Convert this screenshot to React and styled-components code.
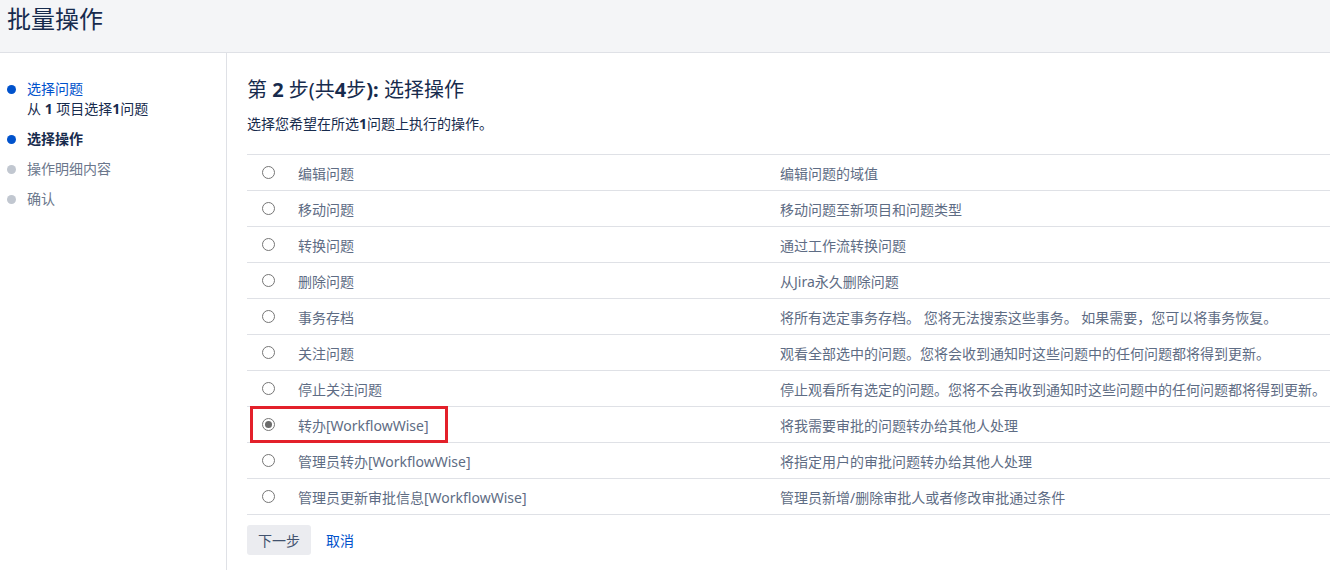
import React from "react";
import styled, { createGlobalStyle } from "styled-components";

const Global = createGlobalStyle`
  html, body { margin: 0; padding: 0; background: #fff; }
  body {
    font-family: "Noto Sans", "Noto Sans CJK SC", sans-serif;
    color: #172b4d;
    font-size: 14px;
  }
`;

const Page = styled.div`
  width: 1330px;
  height: 570px;
  display: flex;
  flex-direction: column;
  overflow: hidden;
`;

const Header = styled.header`
  height: 53px;
  flex: none;
  background: #f4f5f7;
  border-bottom: 1px solid #dfe1e6;
  padding: 3px 0 0 7px;
  box-sizing: border-box;
`;

const Title = styled.h1`
  margin: 0;
  font-size: 24px;
  font-weight: 400;
  line-height: 32px;
  color: #172b4d;
`;

const Body = styled.div`
  flex: 1;
  display: flex;
`;

const Sidebar = styled.nav`
  width: 226px;
  flex: none;
  border-right: 1px solid #dfe1e6;
  padding: 26px 0 0 0;
  box-sizing: content-box;
`;

const Steps = styled.ul`
  list-style: none;
  margin: 0;
  padding: 0;
  display: flex;
  flex-direction: column;
  gap: 10px;
`;

const Step = styled.li`
  position: relative;
  padding-left: 27px;
  font-size: 14px;
  line-height: 20px;
  color: ${(p) => (p.$state === "todo" ? "#6b778c" : "#172b4d")};
  font-weight: ${(p) => (p.$state === "current" ? 700 : 400)};
  &::before {
    content: "";
    position: absolute;
    left: 7px;
    top: 6px;
    width: 9px;
    height: 9px;
    border-radius: 50%;
    background: ${(p) => (p.$state === "todo" ? "#c1c7d0" : "#0052cc")};
  }
`;

const StepLink = styled.a`
  color: #0052cc;
  text-decoration: none;
  display: block;
`;

const Main = styled.main`
  flex: 1;
  padding: 23px 0 0 20px;
`;

const Heading = styled.h2`
  margin: 0;
  font-size: 20px;
  font-weight: 400;
  line-height: 28px;
  color: #172b4d;
  strong { font-weight: 700; }
`;

const Intro = styled.p`
  margin: 10px 0 0;
  font-size: 14px;
  line-height: 20px;
  color: #172b4d;
  strong { font-weight: 700; }
`;

const Table = styled.div`
  margin-top: 20px;
  border-top: 1px solid #dfe1e6;
`;

const Row = styled.label`
  position: relative;
  display: grid;
  grid-template-columns: 51px 482px 1fr;
  align-items: center;
  height: 36px;
  border-bottom: 1px solid #dfe1e6;
  box-sizing: border-box;
  font-size: 14px;
  color: #5e6c84;
  cursor: pointer;
`;

const RadioCell = styled.span`
  display: flex;
  align-items: center;
  padding-left: 15px;
`;

const Radio = styled.span`
  width: 13px;
  height: 13px;
  box-sizing: border-box;
  border-radius: 50%;
  border: 1px solid #767676;
  display: flex;
  align-items: center;
  justify-content: center;
  background: #fff;
  &::after {
    content: "";
    width: 7px;
    height: 7px;
    border-radius: 50%;
    background: ${(p) => (p.$checked ? "#6b6b6b" : "transparent")};
  }
`;

const Cell = styled.span`
  white-space: nowrap;
`;

const Highlight = styled.span`
  position: absolute;
  left: 3px;
  top: -1px;
  width: 198px;
  height: 37px;
  border: 3px solid #e3202a;
  box-sizing: border-box;
  pointer-events: none;
`;

const Actions = styled.div`
  display: flex;
  align-items: center;
  gap: 15px;
  margin-top: 10px;
`;

const Button = styled.button`
  height: 30px;
  padding: 0 11px;
  border: none;
  border-radius: 3px;
  background: #ebecf0;
  color: #42526e;
  font-family: inherit;
  font-size: 14px;
`;

const CancelLink = styled.a`
  color: #0052cc;
  text-decoration: none;
  font-size: 14px;
`;

const ops = [
  ["编辑问题", "编辑问题的域值"],
  ["移动问题", "移动问题至新项目和问题类型"],
  ["转换问题", "通过工作流转换问题"],
  ["删除问题", "从Jira永久删除问题"],
  ["事务存档", "将所有选定事务存档。 您将无法搜索这些事务。 如果需要，您可以将事务恢复。"],
  ["关注问题", "观看全部选中的问题。您将会收到通知时这些问题中的任何问题都将得到更新。"],
  ["停止关注问题", "停止观看所有选定的问题。您将不会再收到通知时这些问题中的任何问题都将得到更新。"],
  ["转办[WorkflowWise]", "将我需要审批的问题转办给其他人处理"],
  ["管理员转办[WorkflowWise]", "将指定用户的审批问题转办给其他人处理"],
  ["管理员更新审批信息[WorkflowWise]", "管理员新增/删除审批人或者修改审批通过条件"],
];

export default function App() {
  const selected = 7;
  return (
    <Page>
      <Global />
      <Header>
        <Title>批量操作</Title>
      </Header>
      <Body>
        <Sidebar>
          <Steps>
            <Step $state="done">
              <StepLink href="#">选择问题</StepLink>
              从 <strong>1</strong> 项目选择<strong>1</strong>问题
            </Step>
            <Step $state="current">选择操作</Step>
            <Step $state="todo">操作明细内容</Step>
            <Step $state="todo">确认</Step>
          </Steps>
        </Sidebar>
        <Main>
          <Heading>
            第 <strong>2</strong> 步(共<strong>4</strong>步<strong>):</strong> 选择操作
          </Heading>
          <Intro>
            选择您希望在所选<strong>1</strong>问题上执行的操作。
          </Intro>
          <Table>
            {ops.map(([name, desc], i) => (
              <Row key={name}>
                <RadioCell>
                  <Radio $checked={i === selected} />
                </RadioCell>
                <Cell>{name}</Cell>
                <Cell>{desc}</Cell>
                {i === selected && <Highlight />}
              </Row>
            ))}
          </Table>
          <Actions>
            <Button>下一步</Button>
            <CancelLink href="#">取消</CancelLink>
          </Actions>
        </Main>
      </Body>
    </Page>
  );
}
